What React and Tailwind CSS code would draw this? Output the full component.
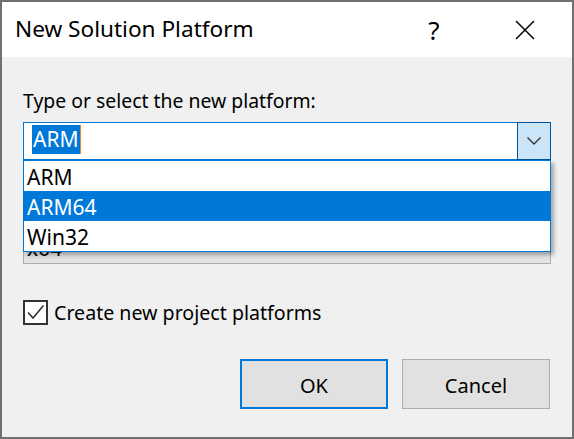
import { useState } from 'react';

const platforms = ['ARM', 'ARM64', 'Win32'];

function CloseIcon() {
  return (
    <svg width="20" height="20" viewBox="0 0 20 20" fill="none" stroke="#000" strokeWidth="1.5">
      <path d="M1 1 L19 19 M19 1 L1 19" />
    </svg>
  );
}

function Chevron() {
  return (
    <svg width="14" height="8" viewBox="0 0 14 8" fill="none" stroke="#333" strokeWidth="1.4">
      <path d="M0.5 0.5 L7 7 L13.5 0.5" />
    </svg>
  );
}

function CheckMark() {
  return (
    <svg width="21" height="21" viewBox="0 0 21 21" fill="none" stroke="#333" strokeWidth="1.6">
      <path d="M3 10.5 L8 16 L18.5 3.5" />
    </svg>
  );
}

export default function App() {
  const [hovered] = useState('ARM64');

  return (
    <div className="w-[574px] h-[439px] border-2 border-[#707070] bg-[#f0f0f0] flex flex-col font-['Noto_Sans',sans-serif] text-black overflow-hidden">
      {/* title bar */}
      <div className="h-[55px] bg-white flex items-center pl-[13px]">
        <span className="text-[22.6px] leading-none">New Solution Platform</span>
        <span className="ml-auto w-[46px] text-center text-[26px] leading-none">?</span>
        <span className="ml-[45px] mr-[24px] w-[46px] flex justify-center">
          <CloseIcon />
        </span>
      </div>

      {/* body */}
      <div className="relative flex-1 px-[21px]">
        <p className="mt-[30px] text-[19.4px] leading-[28px]">Type or select the new platform:</p>

        {/* combo box */}
        <div className="mt-[7px] h-[38px] flex bg-white">
          <div className="flex-1 flex items-start border-y border-l border-[#0078d7] pl-[8px] pt-[2px]">
            <span className="bg-[#0078d7] text-white text-[21px] leading-[29px] px-[1px]">ARM</span>
            <span className="w-px h-[29px] bg-[#e3892f]" />
          </div>
          <div className="w-[34px] border border-[#005499] bg-[#cce4f7] flex items-center justify-center">
            <Chevron />
          </div>
        </div>

        {/* list behind the dropdown */}
        <div className="h-[104px] border border-[#adadad] bg-[#e3e3e3] pl-[3px] pt-[72px]">
          <div className="text-[21px] leading-[30px]">x64</div>
        </div>

        {/* open dropdown */}
        <div className="absolute left-[21px] top-[103px] w-[528px] h-[92px] border border-[#0078d7] bg-white shadow-[3px_3px_4px_rgba(0,0,0,0.3)]">
          {platforms.map((p) => (
            <div
              key={p}
              className={
                p === hovered
                  ? 'h-[30px] pl-[3px] text-[21px] leading-[32px] bg-[#0078d7] text-white'
                  : 'h-[30px] pl-[3px] text-[21px] leading-[32px]'
              }
            >
              {p}
            </div>
          ))}
        </div>

        {/* checkbox */}
        <div className="mt-[36px] flex items-center">
          <div className="w-[25px] h-[25px] border-2 border-[#333] bg-white flex items-center justify-center">
            <CheckMark />
          </div>
          <span className="ml-[6px] text-[19.6px] leading-[25px]">Create new project platforms</span>
        </div>

        {/* buttons */}
        <div className="mt-[34px] mr-[1px] flex justify-end gap-[14px]">
          <button className="w-[148px] h-[50px] pt-[3px] border-2 border-[#0078d7] bg-[#e1e1e1] text-[20px]">OK</button>
          <button className="w-[148px] h-[50px] pt-[3px] border border-[#adadad] bg-[#e1e1e1] text-[20px]">Cancel</button>
        </div>
      </div>
    </div>
  );
}
